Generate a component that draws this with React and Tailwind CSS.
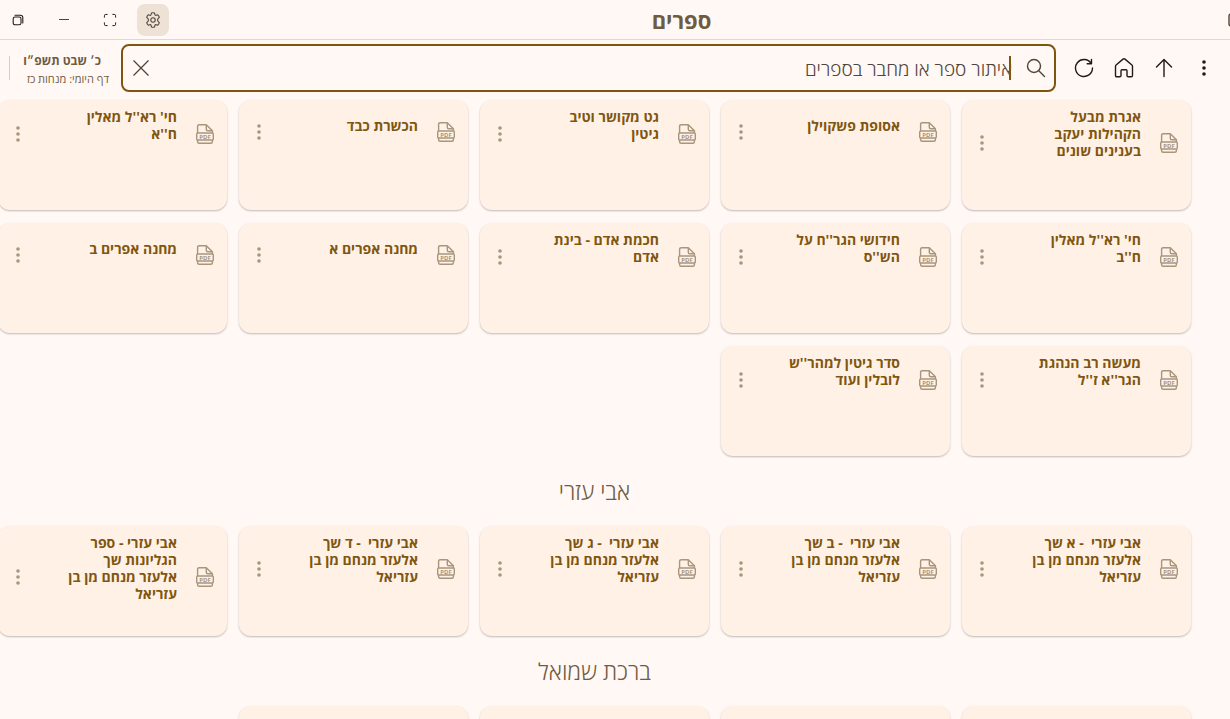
import React from 'react';

const sections = [
  {
    title: null,
    books: [
      ['אגרת מבעל', 'הקהילות יעקב', 'בענינים שונים'],
      ['אסופת פשקוילן'],
      ['גט מקושר וטיב', 'גיטין'],
      ['הכשרת כבד'],
      ["חי' רא''ל מאלין", "ח''א"],
      ["חי' רא''ל מאלין", "ח''ב"],
      ["חידושי הגר''ח על", "הש''ס"],
      ['חכמת אדם - בינת', 'אדם'],
      ['מחנה אפרים א'],
      ['מחנה אפרים ב'],
      ['מעשה רב הנהגת', "הגר''א ז''ל"],
      ["סדר גיטין למהר''ש", 'לובלין ועוד'],
    ],
  },
  {
    title: 'אבי עזרי',
    books: [
      ['אבי עזרי  - א שך', 'אלעזר מנחם מן בן', 'עזריאל'],
      ['אבי עזרי  - ב שך', 'אלעזר מנחם מן בן', 'עזריאל'],
      ['אבי עזרי  - ג שך', 'אלעזר מנחם מן בן', 'עזריאל'],
      ['אבי עזרי  - ד שך', 'אלעזר מנחם מן בן', 'עזריאל'],
      ['אבי עזרי - ספר', 'הגליונות שך', 'אלעזר מנחם מן בן', 'עזריאל'],
    ],
  },
  {
    title: 'ברכת שמואל',
    books: [[], [], [], []],
  },
];

function Icon({ size = 20, children, strokeWidth = 1.4, className = '' }) {
  return (
    <svg
      width={size}
      height={size}
      viewBox="0 0 20 20"
      fill="none"
      stroke="currentColor"
      strokeWidth={strokeWidth}
      strokeLinecap="round"
      strokeLinejoin="round"
      className={`shrink-0 ${className}`}
      aria-hidden="true"
    >
      {children}
    </svg>
  );
}

function DotsIcon() {
  return (
    <svg width="4" height="16" viewBox="0 0 4 16" fill="currentColor" aria-hidden="true">
      <circle cx="2" cy="2" r="1.8" />
      <circle cx="2" cy="8" r="1.8" />
      <circle cx="2" cy="14" r="1.8" />
    </svg>
  );
}

function PdfIcon() {
  return (
    <svg
      width="18"
      height="20"
      viewBox="0 0 18 20"
      fill="none"
      stroke="currentColor"
      strokeWidth="1.4"
      strokeLinejoin="round"
      className="shrink-0"
      aria-hidden="true"
    >
      <path d="M1.6 9V2.2Q1.6.7 3.2.7H10.3L16.4 6.8V9M10.3.7V5.3Q10.3 6.8 11.8 6.8H16.4" />
      <rect x=".7" y="9" width="16.6" height="7" rx="1" />
      <path d="M1.6 16V17.8Q1.6 19.3 3.2 19.3H14.8Q16.4 19.3 16.4 17.8V16" />
      <text
        x="9"
        y="14.7"
        textAnchor="middle"
        fontSize="6"
        fontWeight="700"
        fill="currentColor"
        stroke="none"
        className="font-['Open_Sans',sans-serif]"
      >
        PDF
      </text>
    </svg>
  );
}

function WindowButton({ label, children }) {
  return (
    <button aria-label={label} className="flex h-8 w-[46px] items-center justify-center text-[#1f1b16]">
      {children}
    </button>
  );
}

function TitleBar() {
  return (
    <header className="flex h-10 shrink-0 items-center border-b border-[#e2d8cc]">
      <div className="w-9 shrink-0">
        <button aria-label="תפריט" className="-ms-4 block text-[#50453a]">
          <Icon>
            <rect x="3" y="4" width="12" height="12" rx="2" />
          </Icon>
        </button>
      </div>
      <h1 className="flex-1 text-center text-[22px] leading-8 font-bold text-[#6f5b40]">ספרים</h1>
      <div dir="ltr" className="-ml-[5px] flex shrink-0 items-center">
        <WindowButton label="שחזור">
          <Icon size={12} strokeWidth={1.8}>
            <rect x="2" y="5" width="13" height="13" rx="3" />
            <path d="M5 2H14Q18 2 18 6V15" />
          </Icon>
        </WindowButton>
        <WindowButton label="מזעור">
          <span className="h-px w-2.5 bg-[#50453a]" />
        </WindowButton>
        <WindowButton label="מסך מלא">
          <Icon size={14}>
            <path d="M2 6V4Q2 2 4 2H6M14 2H16Q18 2 18 4V6M18 14V16Q18 18 16 18H14M6 18H4Q2 18 2 16V14" />
          </Icon>
        </WindowButton>
        <button
          aria-label="הגדרות"
          className="ml-1 flex size-8 items-center justify-center rounded-lg bg-[#eee1d5] text-[#50453a]"
        >
          <Icon size={18} strokeWidth={1.2}>
            <path d="M8.3 2.2Q10 1.8 11.7 2.2L12.1 4.1Q12.4 5 13.4 4.8L15.3 4.2Q16.6 5.4 17 7L15.6 8.5Q14.4 10 15.6 11.5L17 13Q16.6 14.6 15.3 15.8L13.4 15.2Q12.4 15 12.1 15.9L11.7 17.8Q10 18.2 8.3 17.8L7.9 15.9Q7.6 15 6.6 15.2L4.7 15.8Q3.4 14.6 3 13L4.4 11.5Q5.6 10 4.4 8.5L3 7Q3.4 5.4 4.7 4.2L6.6 4.8Q7.6 5 7.9 4.1Z" />
            <circle cx="10" cy="10" r="2.5" />
          </Icon>
        </button>
      </div>
    </header>
  );
}

function ToolButton({ label, children }) {
  return (
    <button aria-label={label} className="flex size-10 items-center justify-center text-[#1f1b16]">
      {children}
    </button>
  );
}

function Toolbar() {
  return (
    <div className="flex h-14 shrink-0 items-center ps-1.5">
      <div className="flex shrink-0">
        <ToolButton label="עוד">
          <DotsIcon />
        </ToolButton>
        <ToolButton label="למעלה">
          <Icon>
            <path d="M10 18.5V2M2.5 9L10 1.5L17.5 9" />
          </Icon>
        </ToolButton>
        <ToolButton label="בית">
          <Icon>
            <path d="M1.5 8.2Q1.5 7.5 2.1 7L9 1.1Q10 .4 11 1.1L17.9 7Q18.5 7.5 18.5 8.2V17.5Q18.5 18.7 17.3 18.7H14.2Q13 18.7 13 17.5V12.7Q13 11.7 12 11.7H8Q7 11.7 7 12.7V17.5Q7 18.7 5.8 18.7H2.7Q1.5 18.7 1.5 17.5Z" />
          </Icon>
        </ToolButton>
        <ToolButton label="רענון">
          <Icon>
            <path d="M17.2 5.5A8.5 8.5 0 1 0 18.5 10M17.5 1.5V5.8H13.2" />
          </Icon>
        </ToolButton>
      </div>
      <div className="relative ms-2 flex h-12 min-w-0 flex-1 items-center rounded-lg border-2 border-[#7f5610] px-2 text-[#50453a]">
        <Icon>
          <circle cx="8" cy="8" r="6.5" />
          <path d="M12.8 12.8L18.5 18.5" />
        </Icon>
        <input
          type="text"
          aria-label="חיפוש"
          placeholder="איתור ספר או מחבר בספרים"
          className="ms-3.5 min-w-0 flex-1 bg-transparent pt-0.5 text-[19px] leading-6 font-light outline-none placeholder:text-[#50453a]"
        />
        <span className="absolute start-[43px] h-6 w-0.5 bg-[#7f5610]" />
        <button aria-label="ניקוי" className="-me-0.5 flex size-6 items-center justify-center">
          <Icon size={18}>
            <path d="M2 2L18 18M18 2L2 18" />
          </Icon>
        </button>
      </div>
      <div className="ms-3 me-[9px] flex shrink-0 items-center gap-3">
        <div className="w-[87px] pt-1 whitespace-nowrap text-[#6f5b40]">
          <p className="ps-2 text-xs leading-[18px] font-bold">כ׳ שבט תשפ״ו</p>
          <p className="text-[11px] leading-[18px]">דף היומי: מנחות כז</p>
        </div>
        <span className="h-6 w-px bg-[#d8cdc0]" />
      </div>
    </div>
  );
}

function BookCard({ lines }) {
  return (
    <article className="h-[110px] rounded-xl bg-[#fff1e5] shadow-[0_1px_2px_rgba(0,0,0,0.25)]">
      {lines.length > 0 && (
        <div className="flex min-h-16 items-center ps-[13px] pe-[18px] text-[#a8957d]">
          <PdfIcon />
          <h3
            className={`ms-[19px] flex-1 pt-2 text-sm leading-[17px] font-bold whitespace-pre text-[#7f5610] ${lines.length > 1 ? 'pb-[26px]' : 'pb-[22px]'}`}
          >
            {lines.map((line, i) => (
              <span key={i} className="block">
                {line}
              </span>
            ))}
          </h3>
          <button aria-label="אפשרויות">
            <DotsIcon />
          </button>
        </div>
      )}
    </article>
  );
}

export default function App() {
  return (
    <div
      dir="rtl"
      className="flex h-screen flex-col overflow-hidden bg-[#fff8f5] font-['Open_Sans','Noto_Sans',sans-serif]"
    >
      <TitleBar />
      <Toolbar />
      <main className="-me-0.5 min-h-0 flex-1 overflow-hidden ps-[39px] pt-1">
        {sections.map((section, i) => (
          <section key={i}>
            {section.title && (
              <h2 className="py-5 text-center text-[23px] leading-[30px] font-light text-[#6f5b40]">{section.title}</h2>
            )}
            <div className="grid grid-cols-5 gap-x-3 gap-y-[13px]">
              {section.books.map((lines, j) => (
                <BookCard key={j} lines={lines} />
              ))}
            </div>
          </section>
        ))}
      </main>
    </div>
  );
}
